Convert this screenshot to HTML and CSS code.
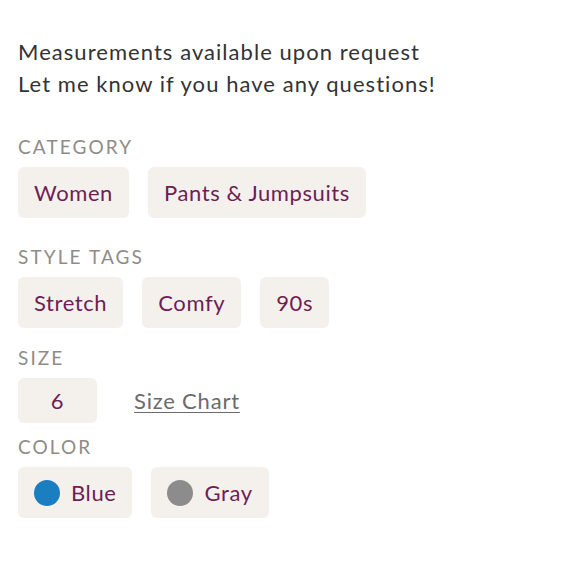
FILE: index.html
```html
<!DOCTYPE html>
<html>
<head>
<meta charset="utf-8">
<link rel="stylesheet" href="styles.css">
</head>
<body>
<div class="page">
  <p class="intro">Measurements available upon request<br>Let me know if you have any questions!</p>

  <section class="group group-category">
    <div class="label">CATEGORY</div>
    <div class="row">
      <span class="chip">Women</span>
      <span class="chip">Pants &amp; Jumpsuits</span>
    </div>
  </section>

  <section class="group group-tags">
    <div class="label">STYLE TAGS</div>
    <div class="row">
      <span class="chip">Stretch</span>
      <span class="chip">Comfy</span>
      <span class="chip">90s</span>
    </div>
  </section>

  <section class="group group-size">
    <div class="label">SIZE</div>
    <div class="row row-size">
      <span class="chip chip-size">6</span>
      <a class="size-chart" href="#">Size Chart</a>
    </div>
  </section>

  <section class="group group-color">
    <div class="label">COLOR</div>
    <div class="row">
      <span class="chip chip-color"><span class="dot dot-blue"></span>Blue</span>
      <span class="chip chip-color"><span class="dot dot-gray"></span>Gray</span>
    </div>
  </section>
</div>
</body>
</html>
```

FILE: styles.css
```css
* { box-sizing: border-box; }
html, body { margin: 0; padding: 0; background: #fff; }
body { font-family: "Lato", "Noto Sans", sans-serif; }

.page { padding: 36px 18px 0 18px; }

.intro {
  margin: 0;
  font-size: 22px;
  line-height: 32px;
  letter-spacing: 1.05px;
  color: #333;
}

.group { display: flex; flex-direction: column; }
.group-category { margin-top: 36px; }
.group-tags { margin-top: 28px; }
.group-size { margin-top: 19px; }
.group-color { margin-top: 13px; }

.label {
  font-size: 19px;
  line-height: 22px;
  letter-spacing: 2.1px;
  color: #8f8c88;
  margin-bottom: 9px;
}

.row { display: flex; align-items: center; gap: 19px; }
.row-size { gap: 37px; }

.chip {
  display: inline-flex;
  align-items: center;
  height: 51px;
  padding: 0 16px;
  background: #f4f1ed;
  border-radius: 6px;
  font-size: 22px;
  letter-spacing: 0.6px;
  color: #6e1e55;
}

.chip-size {
  height: 45px;
  width: 79px;
  justify-content: center;
  padding: 0;
}

.chip-color { padding: 0 16px 0 16px; gap: 11px; }

.dot {
  width: 26px;
  height: 26px;
  border-radius: 50%;
  display: inline-block;
}
.dot-blue { background: #1a7ec1; }
.dot-gray { background: #8c8c8c; }

.size-chart {
  font-size: 22px;
  letter-spacing: 0.8px;
  color: #6b6b6b;
  text-decoration: underline;
  text-underline-offset: 3px;
  text-decoration-thickness: 1px;
}
```
